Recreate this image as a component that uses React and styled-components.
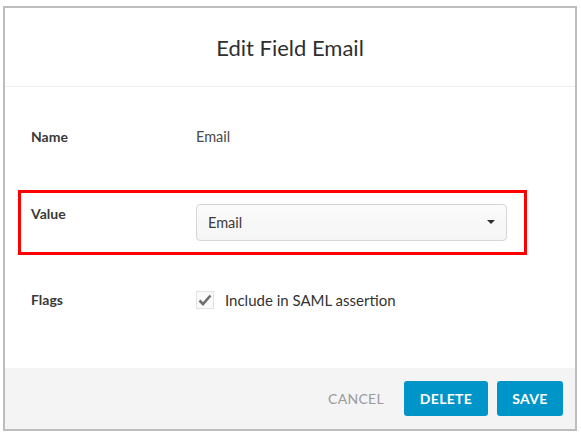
import React from "react";
import styled, { createGlobalStyle } from "styled-components";

const GlobalStyle = createGlobalStyle`
  html, body {
    margin: 0;
    padding: 0;
    background: #fff;
  }
  body {
    font-family: Lato, "Open Sans", "Liberation Sans", sans-serif;
    color: #333;
  }
`;

const Page = styled.div`
  padding: 6px 4px 4px 3px;
`;

const Dialog = styled.div`
  width: 570px;
  height: 421px;
  border: 2px solid #bdbdbd;
  display: flex;
  flex-direction: column;
  background: #fff;
`;

const Header = styled.div`
  height: 78px;
  border-bottom: 1px solid #efefef;
  display: flex;
  align-items: center;
  justify-content: center;

  & > h1 {
    margin: 0;
    font-size: 22px;
    font-weight: 400;
    color: #2f2f2f;
    padding-top: 1px;
  }
`;

const Body = styled.div`
  flex: 1;
  padding: 40px 0 0 26px;
  display: flex;
  flex-direction: column;
`;

const Row = styled.div`
  display: flex;
  align-items: center;
  min-height: 20px;
  margin-top: ${(p) => p.$gap || 0}px;
  font-size: 14px;
`;

const Highlight = styled.div`
  display: flex;
  align-items: flex-start;
  margin: 43px 0 0 -13px;
  width: 509px;
  height: 65px;
  padding: 11px 0 0 10px;
  border: 3px solid #ff0000;
  box-sizing: border-box;
  font-size: 14px;
`;

const Label = styled.div`
  width: 165px;
  flex-shrink: 0;
  font-weight: 700;
  color: #3a3a3a;
  line-height: 20px;
  margin-top: ${(p) => p.$offset || 0}px;
`;

const Value = styled.div`
  color: #4a4a4a;
  line-height: 20px;
  font-size: 14.5px;
`;

const Select = styled.div`
  width: 311px;
  height: 37px;
  box-sizing: border-box;
  border: 1px solid #d6d6d6;
  border-radius: 4px;
  background: linear-gradient(#fbfbfb, #f5f5f5);
  display: flex;
  align-items: center;
  justify-content: space-between;
  padding: 0 11px 1px 11px;
  color: #3a3a3a;
  font-size: 14.5px;
`;

const Caret = styled.span`
  width: 0;
  height: 0;
  border-left: 4px solid transparent;
  border-right: 4px solid transparent;
  border-top: 4px solid #2f2f2f;
`;

const CheckLabel = styled.label`
  display: flex;
  align-items: center;
  gap: 11px;
  color: #333;
  font-size: 15px;
`;

const CheckBox = styled.span`
  width: 18px;
  height: 18px;
  box-sizing: border-box;
  border: 1px solid #e2e2e2;
  background: #fafafa;
  display: flex;
  align-items: center;
  justify-content: center;
`;

const Footer = styled.div`
  height: 61px;
  background: #f4f4f4;
  display: flex;
  align-items: center;
  justify-content: flex-end;
  gap: 9px;
  padding-right: 12px;
`;

const TextButton = styled.button`
  border: none;
  background: none;
  font-family: inherit;
  font-size: 14px;
  color: #9a9a9a;
  letter-spacing: 0.3px;
  margin-right: 11px;
  padding: 0;
`;

const Button = styled.button`
  height: 35px;
  width: ${(p) => p.$width}px;
  border: none;
  border-radius: 3px;
  background: #0095c8;
  color: #fff;
  font-family: inherit;
  font-size: 14px;
  font-weight: 700;
  letter-spacing: 0.3px;
`;

function App() {
  return (
    <Page>
      <GlobalStyle />
      <Dialog>
        <Header>
          <h1>Edit Field Email</h1>
        </Header>
        <Body>
          <Row>
            <Label>Name</Label>
            <Value>Email</Value>
          </Row>
          <Highlight>
            <Label $offset={0}>Value</Label>
            <Select>
              <span>Email</span>
              <Caret />
            </Select>
          </Highlight>
          <Row $gap={35}>
            <Label>Flags</Label>
            <CheckLabel>
              <CheckBox>
                <svg width="14" height="12" viewBox="0 0 14 12">
                  <path
                    d="M1.5 6.5 L5 10 L12.5 1.5"
                    fill="none"
                    stroke="#6f6f6f"
                    strokeWidth="2.6"
                  />
                </svg>
              </CheckBox>
              Include in SAML assertion
            </CheckLabel>
          </Row>
        </Body>
        <Footer>
          <TextButton>CANCEL</TextButton>
          <Button $width={84}>DELETE</Button>
          <Button $width={66}>SAVE</Button>
        </Footer>
      </Dialog>
    </Page>
  );
}

export default App;
